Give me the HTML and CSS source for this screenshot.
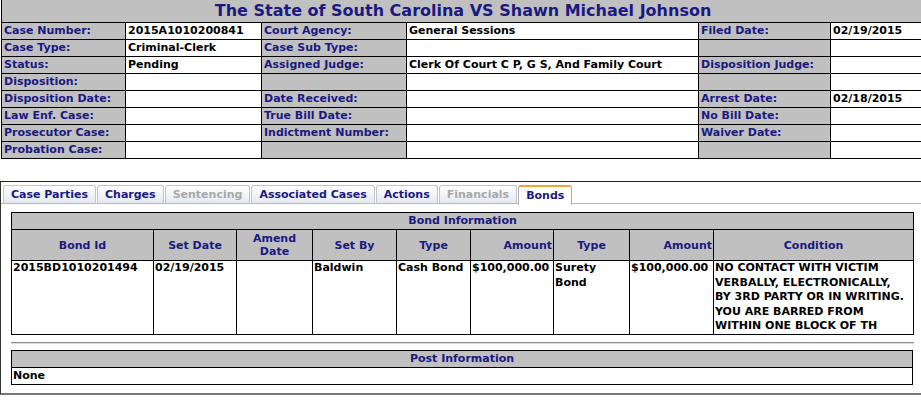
FILE: index.html
```html
<!DOCTYPE html>
<html>
<head>
<meta charset="utf-8">
<link rel="stylesheet" href="styles.css">
</head>
<body>
<div class="page">
  <table class="case">
    <colgroup>
      <col class="c1"><col class="c2"><col class="c3"><col class="c4"><col class="c5"><col class="c6">
    </colgroup>
    <tr><th colspan="6" class="title">The State of South Carolina VS Shawn Michael Johnson</th></tr>
    <tr><td class="lbl">Case Number:</td><td>2015A1010200841</td><td class="lbl">Court Agency:</td><td>General Sessions</td><td class="lbl">Filed Date:</td><td>02/19/2015</td></tr>
    <tr><td class="lbl">Case Type:</td><td>Criminal-Clerk</td><td class="lbl">Case Sub Type:</td><td></td><td class="lbl"></td><td></td></tr>
    <tr><td class="lbl">Status:</td><td>Pending</td><td class="lbl">Assigned Judge:</td><td>Clerk Of Court C P, G S, And Family Court</td><td class="lbl">Disposition Judge:</td><td></td></tr>
    <tr><td class="lbl">Disposition:</td><td></td><td class="lbl"></td><td></td><td class="lbl"></td><td></td></tr>
    <tr><td class="lbl">Disposition Date:</td><td></td><td class="lbl">Date Received:</td><td></td><td class="lbl">Arrest Date:</td><td>02/18/2015</td></tr>
    <tr><td class="lbl">Law Enf. Case:</td><td></td><td class="lbl">True Bill Date:</td><td></td><td class="lbl">No Bill Date:</td><td></td></tr>
    <tr><td class="lbl">Prosecutor Case:</td><td></td><td class="lbl">Indictment Number:</td><td></td><td class="lbl">Waiver Date:</td><td></td></tr>
    <tr><td class="lbl">Probation Case:</td><td></td><td class="lbl"></td><td></td><td class="lbl"></td><td></td></tr>
  </table>

  <div class="tabbox">
    <ul class="tabs">
      <li class="tab">Case Parties</li>
      <li class="tab">Charges</li>
      <li class="tab off">Sentencing</li>
      <li class="tab">Associated Cases</li>
      <li class="tab">Actions</li>
      <li class="tab off">Financials</li>
      <li class="tab on">Bonds</li>
    </ul>
    <div class="panel">
      <table class="grid bonds">
        <colgroup>
          <col class="b1"><col class="b2"><col class="b3"><col class="b4"><col class="b5"><col class="b6"><col class="b7"><col class="b8"><col class="b9">
        </colgroup>
        <tr><th colspan="9" class="cap">Bond Information</th></tr>
        <tr class="heads">
          <th>Bond Id</th><th>Set Date</th><th>Amend Date</th><th>Set By</th><th>Type</th><th class="r">Amount</th><th>Type</th><th class="r">Amount</th><th>Condition</th>
        </tr>
        <tr class="data">
          <td>2015BD1010201494</td><td>02/19/2015</td><td></td><td>Baldwin</td><td>Cash Bond</td><td>$100,000.00</td><td>Surety Bond</td><td>$100,000.00</td><td>NO CONTACT WITH VICTIM<br>VERBALLY, ELECTRONICALLY,<br>BY 3RD PARTY OR IN WRITING.<br>YOU ARE BARRED FROM<br>WITHIN ONE BLOCK OF TH</td>
        </tr>
      </table>
      <hr class="sep">
      <table class="grid post">
        <tr><th class="cap">Post Information</th></tr>
        <tr><td>None</td></tr>
      </table>
    </div>
  </div>
</div>
</body>
</html>
```

FILE: styles.css
```css
html, body {
  margin: 0;
  padding: 0;
  background: #fff;
  overflow: hidden;
}
body {
  font-family: "DejaVu Sans", Verdana, sans-serif;
  font-size: 11px;
  font-weight: bold;
  color: #000;
}
.page {
  width: 924px;
}
table {
  border-collapse: collapse;
  font-size: 11px;
}
.case {
  width: 923px;
  margin-left: 1px;
  table-layout: fixed;
}
.case col.c1 { width: 124px; }
.case col.c2 { width: 136px; }
.case col.c3 { width: 145px; }
.case col.c4 { width: 292px; }
.case col.c5 { width: 132px; }
.case col.c6 { width: 94px; }
.case td, .case th {
  border: 1px solid #000;
  padding: 0 2px;
  height: 16px;
  line-height: 14px;
  white-space: nowrap;
  overflow: hidden;
  text-align: left;
  vertical-align: middle;
}
.case th.title {
  background: #c0c0c0;
  color: #1a1a80;
  font-size: 16px;
  height: 22px;
  line-height: 22px;
  text-align: center;
  border-top: none;
  padding: 0;
}
.case td.lbl {
  background: #c0c0c0;
  color: #1a1a80;
}

.tabbox {
  margin-top: 22px;
  border-top: 1px solid #222;
  border-left: 1px solid #333;
  border-bottom: 2px solid #777;
  width: 922px;
}
.tabs {
  list-style: none;
  margin: 3px 0 0 0;
  padding: 0 0 0 2px;
  display: flex;
  gap: 1px;
  border-bottom: 1px solid #b8b8b8;
  height: 18px;
}
.tab {
  height: 17px;
  line-height: 17px;
  padding: 0 7px;
  border: 1px solid #c4c4cc;
  border-bottom: none;
  border-radius: 3px 3px 0 0;
  background: linear-gradient(#ffffff, #e6e8f2);
  color: #1a1a80;
}
.tab.off {
  color: #a8a8a8;
}
.tab.on {
  background: #fff;
  border-color: #b0b0b0;
  border-top: 2px solid #e8a83a;
  height: 18px;
  line-height: 17px;
  margin-bottom: -1px;
  padding: 0 7px;
}
.panel {
  padding: 8px 9px 8px 10px;
}
.grid {
  width: 902px;
  border: 1px solid #000;
}
.grid th, .grid td {
  border: 1px solid #000;
  padding: 0 1px;
}
.grid th {
  background: #c0c0c0;
  color: #1a1a80;
  text-align: center;
  font-weight: bold;
}
.grid th.cap {
  height: 16px;
  line-height: 14px;
}
.bonds { table-layout: fixed; }
.bonds col.b1 { width: 142px; }
.bonds col.b2 { width: 83px; }
.bonds col.b3 { width: 76px; }
.bonds col.b4 { width: 84px; }
.bonds col.b5 { width: 74px; }
.bonds col.b6 { width: 83px; }
.bonds col.b7 { width: 76px; }
.bonds col.b8 { width: 84px; }
.bonds col.b9 { width: 200px; }
.heads th {
  height: 30px;
  line-height: 13px;
}
.heads th.r { text-align: right; }
.data td {
  height: 72px;
  vertical-align: top;
  line-height: 14.5px;
  padding-top: 0;
  text-align: left;
  color: #000;
}
.sep {
  margin: 7px 0 6px 0;
  border: none;
  border-top: 1px solid #888;
  border-bottom: 1px solid #ddd;
  height: 0;
}
.post td {
  height: 16px;
  line-height: 14px;
}
```
